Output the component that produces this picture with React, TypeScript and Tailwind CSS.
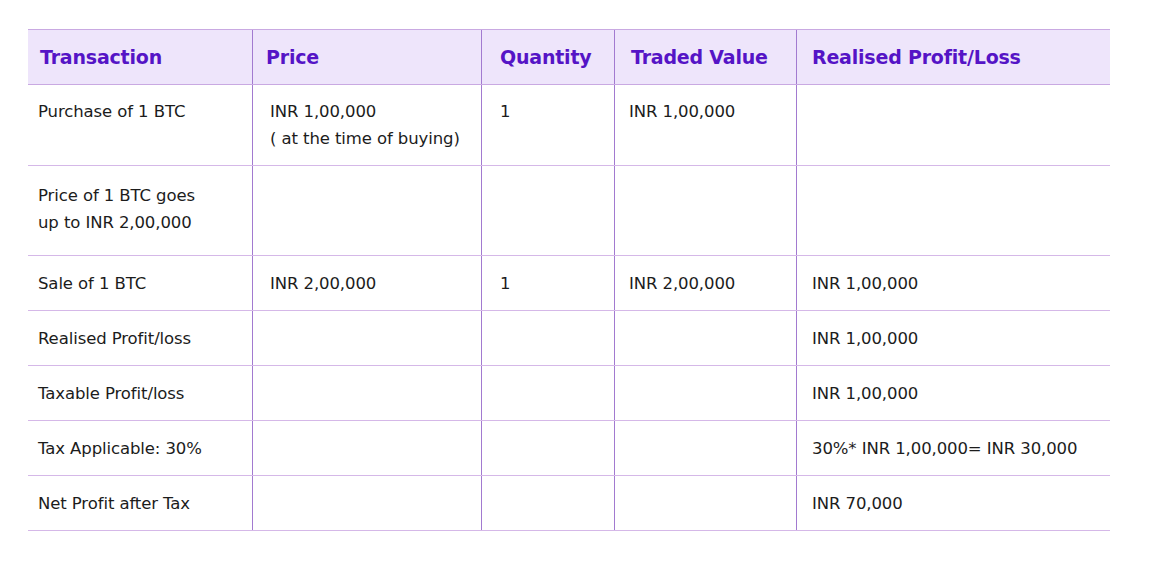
const cols = 'grid grid-cols-[225px_229px_133px_182px_313px]';

const padX = ['pl-[10px]', 'pl-[17px]', 'pl-[18px]', 'pl-[14px]', 'pl-[15px]'];
const headPadX = ['pl-[12px]', 'pl-[13px]', 'pl-[18px]', 'pl-[16px]', 'pl-[15px]'];

const headers = ['Transaction', 'Price', 'Quantity', 'Traded Value', 'Realised Profit/Loss'];

type Row = { cells: string[][]; h: string; top?: string };

const rows: Row[] = [
  {
    cells: [['Purchase of 1 BTC'], ['INR 1,00,000', '( at the time of buying)'], ['1'], ['INR 1,00,000'], []],
    h: 'h-[81px]',
    top: 'pt-[13px]',
  },
  {
    cells: [['Price of 1 BTC goes', 'up to INR 2,00,000'], [], [], [], []],
    h: 'h-[90px]',
    top: 'pt-[16px]',
  },
  { cells: [['Sale of 1 BTC'], ['INR 2,00,000'], ['1'], ['INR 2,00,000'], ['INR 1,00,000']], h: 'h-[55px]' },
  { cells: [['Realised Profit/loss'], [], [], [], ['INR 1,00,000']], h: 'h-[55px]' },
  { cells: [['Taxable Profit/loss'], [], [], [], ['INR 1,00,000']], h: 'h-[55px]' },
  { cells: [['Tax Applicable: 30%'], [], [], [], ['30%* INR 1,00,000= INR 30,000']], h: 'h-[55px]' },
  { cells: [['Net Profit after Tax'], [], [], [], ['INR 70,000']], h: 'h-[55px]' },
];

export default function App() {
  return (
    <div
      className="w-[1155px] h-[566px] bg-white pt-[29px] pl-[28px]"
      style={{ fontFamily: '"DejaVu Sans", sans-serif' }}
    >
      <div className="w-[1082px]">
        {/* Header */}
        <div className={`${cols} h-[56px] bg-[#eee5fb] border-y border-[#c9a9e2]`}>
          {headers.map((h, i) => (
            <div
              key={h}
              className={`flex items-center ${headPadX[i]} ${i < 4 ? 'border-r border-[#a27ad0]' : ''} text-[19px] font-bold text-[#5514c6] tracking-[-0.2px]`}
            >
              {h}
            </div>
          ))}
        </div>

        {/* Body */}
        {rows.map((r, ri) => (
          <div key={ri} className={`${cols} ${r.h} border-b border-[#d5b8e8]`}>
            {r.cells.map((lines, ci) => (
              <div
                key={ci}
                className={`flex flex-col ${r.top ? r.top : 'justify-center'} ${padX[ci]} ${ci < 4 ? 'border-r border-[#a27ad0]' : ''} text-[16.5px] leading-[27px] text-[#1c1c1c] tracking-[-0.1px]`}
              >
                {lines.map((l) => (
                  <span key={l}>{l}</span>
                ))}
              </div>
            ))}
          </div>
        ))}
      </div>
    </div>
  );
}
